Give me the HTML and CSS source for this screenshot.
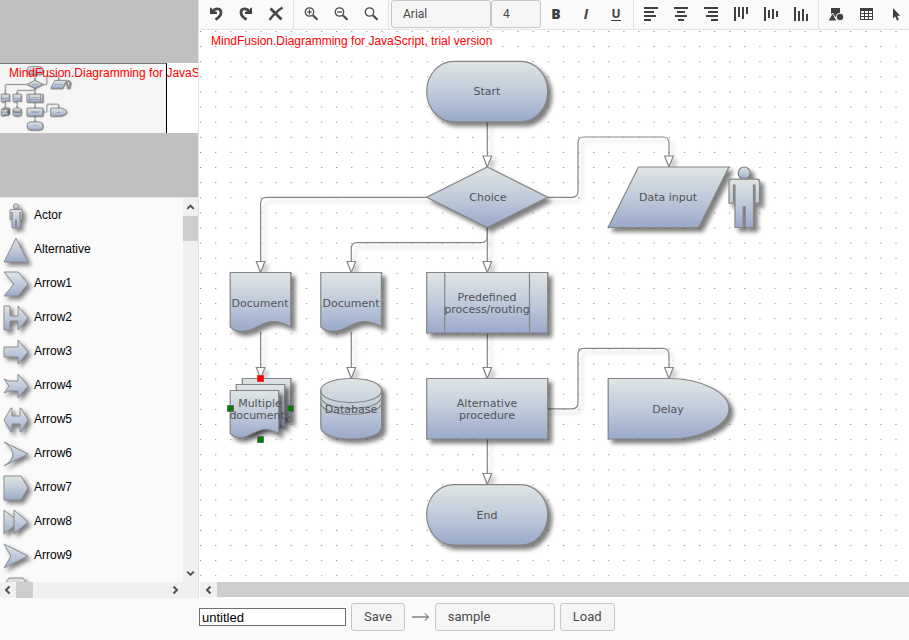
FILE: index.html
```html
<!DOCTYPE html>
<html lang="en">
<head>
<meta charset="utf-8">
<title>Diagram editor</title>
<link rel="stylesheet" href="styles.css">
</head>
<body>
<div class="app">
  <aside class="side">
    <div class="overview">
      <div class="overview-page">
        <div class="overview-view"></div>
        <svg class="mini" aria-hidden="true">
          <g transform="translate(-28.900 -4.500) scale(.131)">
            <use href="#links"/><use href="#nodes"/><use href="#labels"/>
          </g>
        </svg>
        <p class="trial">MindFusion.Diagramming for JavaScript, trial version</p>
      </div>
    </div>
    <div class="palette">
      <ul class="shapes">
        <li><svg><g><circle cx="16" cy="8.500" r="2.700"/><path d="M11 11.500h10q1 0 1 1v9h-2v-7.500v16h-3.500v-8h-1v8H12v-16v7.500h-2v-9q0-1 1-1z"/></g></svg>Actor</li>
        <li><svg><path d="M16 6l12 24H4z"/></svg>Alternative</li>
        <li><svg><path d="M4 6h14l10 12-10 12H4l10-12z"/></svg>Arrow1</li>
        <li><svg><path d="M4 6h6v10h8V6l10 12-10 12v-9h-8v9H4z"/></svg>Arrow2</li>
        <li><svg><path d="M4 13h14V6l10 12-10 12v-7H4z"/></svg>Arrow3</li>
        <li><svg><path d="M4 11l5 2h9V6l10 12-10 12v-7H9l-5 2 5-7z"/></svg>Arrow4</li>
        <li><svg><path d="M4 18l7-12h1v8h8V6h1l7 12-7 12h-1v-8h-8v8h-1z"/></svg>Arrow5</li>
        <li><svg><path d="M4 6l24 12L4 30q18-12 0-24z"/></svg>Arrow6</li>
        <li><svg><path d="M4 6h17l7 12-7 12H4z"/></svg>Arrow7</li>
        <li><svg><path d="M4 6l15 12L4 30z"/><path d="M14 6l14 12-14 12z"/></svg>Arrow8</li>
        <li><svg><path d="M4 6l24 12L4 30l7-12z"/></svg>Arrow9</li>
        <li aria-hidden="true"><svg><path d="M4 13l5-7h14l5 7v10l-5 7H9l-5-7z"/></svg></li>
      </ul>
      <div class="vbar">
        <button class="arrow" aria-label="Scroll up"><svg viewBox="0 0 16 16"><path d="M4.500 10L8 6.500l3.500 3.500"/></svg></button>
        <div class="vthumb"></div>
        <button class="arrow end" aria-label="Scroll down"><svg viewBox="0 0 16 16"><path d="M4.500 6.500L8 10l3.500-3.500"/></svg></button>
      </div>
      <div class="hbar">
        <button class="arrow" aria-label="Scroll left"><svg viewBox="0 0 16 16"><path d="M9.500 4.500L6 8l3.500 3.500"/></svg></button>
        <div class="hthumb"></div>
        <button class="arrow end" aria-label="Scroll right"><svg viewBox="0 0 16 16"><path d="M6.500 4.500L10 8l-3.500 3.500"/></svg></button>
      </div>
      <div class="corner"></div>
    </div>
  </aside>

  <main class="editor">
    <div class="toolbar">
      <div class="group">
        <button aria-label="Undo"><svg viewBox="0 0 18 18"><path class="ink" d="M3 2.500l1.500.5 1 2.500 4.500 1.500V9H3z"/><path class="line" stroke-width="2.800" d="M5.500 6.500C8 3 14 2.500 14 7.500c0 3-2 5-5.500 7"/></svg></button>
        <button aria-label="Redo"><svg viewBox="0 0 18 18"><path class="ink" d="M15 2.500l-1.500.5-1 2.500L8 7v2h7z"/><path class="line" stroke-width="2.800" d="M12.500 6.500C10 3 4 2.500 4 7.500c0 3 2 5 5.500 7"/></svg></button>
        <button aria-label="Delete"><svg viewBox="0 0 18 18"><path class="line" stroke-width="2.900" d="M3.500 3.500l11 11"/><path class="line" stroke-width="2.200" d="M15.500 2.500C10 6 6 10 2.500 15"/></svg></button>
      </div>
      <div class="group">
        <button aria-label="Zoom in"><svg viewBox="0 0 18 18"><circle class="line" cx="7.500" cy="7" r="4.200" stroke-width="1.300"/><path class="line" stroke-width="1.200" d="M5 7h5M7.500 4.500v5"/><path class="line" stroke-width="2.200" d="M10.800 10.300l4.700 4.400"/></svg></button>
        <button aria-label="Zoom out"><svg viewBox="0 0 18 18"><circle class="line" cx="7.500" cy="7" r="4.200" stroke-width="1.300"/><path class="line" stroke-width="1.200" d="M5 7h5"/><path class="line" stroke-width="2.200" d="M10.800 10.300l4.700 4.400"/></svg></button>
        <button aria-label="Reset zoom"><svg viewBox="0 0 18 18"><circle class="line" cx="7.500" cy="7" r="4.200" stroke-width="1.300"/><path class="line" stroke-width="2.200" d="M10.800 10.300l4.700 4.400"/></svg></button>
      </div>
      <div class="group">
        <select class="field font" aria-label="Font"><option>Arial</option></select>
        <select class="field size" aria-label="Font size"><option>4</option></select>
        <button class="letter" aria-label="Bold"><b>B</b></button>
        <button class="letter" aria-label="Italic"><i>I</i></button>
        <button class="letter" aria-label="Underline"><span class="under">U</span></button>
      </div>
      <div class="group">
        <button aria-label="Align left"><svg viewBox="0 0 18 18"><path class="ink" d="M2 2h14v2H2zM2 6h10v2H2zM2 10h12v2H2zM2 14h7v2H2z"/></svg></button>
        <button aria-label="Align center"><svg viewBox="0 0 18 18"><path class="ink" d="M2 2h14v2H2zM5 6h8v2H5zM3 10h12v2H3zM6 14h6v2H6z"/></svg></button>
        <button aria-label="Align right"><svg viewBox="0 0 18 18"><path class="ink" d="M2 2h14v2H2zM6 6h10v2H6zM4 10h12v2H4zM9 14h7v2H9z"/></svg></button>
        <button aria-label="Align top"><svg viewBox="0 0 18 18"><path class="ink" d="M2 2h2v14H2zM6 2h2v10H6zM10 2h2v12h-2zM14 2h2v7h-2z"/></svg></button>
        <button aria-label="Align middle"><svg viewBox="0 0 18 18"><path class="ink" d="M2 2h2v14H2zM6 5h2v8H6zM10 4h2v10h-2zM14 6h2v6h-2z"/></svg></button>
        <button aria-label="Align bottom"><svg viewBox="0 0 18 18"><path class="ink" d="M2 2h2v14H2zM6 6h2v10H6zM10 4h2v12h-2zM14 9h2v7h-2z"/></svg></button>
      </div>
      <div class="group last">
        <button aria-label="Shapes"><svg viewBox="0 0 18 18"><path class="ink" d="M4 3h9v9H4z"/><path class="ink halo" d="M5.500 8L10 16H1z"/><circle class="ink halo" cx="13" cy="12" r="3.800"/></svg></button>
        <button aria-label="Table"><svg viewBox="0 0 18 18"><path class="ink" fill-rule="evenodd" d="M3 3h13v12H3zM4 6h3v2H4zM8 6h3v2H8zM12 6h3v2h-3zM4 9h3v2H4zM8 9h3v2H8zM12 9h3v2h-3zM4 12h3v2H4zM8 12h3v2H8zM12 12h3v2h-3z"/></svg></button>
        <button aria-label="Select"><svg viewBox="0 0 18 18"><path class="ink" d="M6 3v10.500l2.300-2 1.600 4 2-.8-1.700-3.900h3z"/></svg></button>
      </div>
    </div>

    <svg class="canvas" role="img" aria-label="Flowchart">
      <defs>
        <linearGradient id="steel" x1="0" y1="0" x2="0" y2="1">
          <stop offset="0" stop-color="#e0e5e5"/><stop offset=".5" stop-color="#c0cbda"/><stop offset="1" stop-color="#9aa9cb"/>
        </linearGradient>
        <pattern id="dots" x="0" y="1" width="15.118" height="15.118" patternUnits="userSpaceOnUse">
          <path d="M0 0h1.200v1H0z" fill="#8c8c8c"/>
        </pattern>
        <path id="tip" d="M-4.300-11h8.600L0 0z" fill="#fff"/>
      </defs>
      <rect width="100%" height="100%" fill="url(#dots)"/>
      <g class="flow" transform="translate(-200 -30)">
        <g id="links" class="links" fill="none">
          <path d="M487.300 121.500V156M487.300 227v34M487.300 333v35M487.300 439v35M260.600 332v36M351.300 332v36"/>
          <path d="M548 197.300h24q6 0 6-6V143q0-6 6-6h79q6 0 6 6v14"/>
          <path d="M427 197.300H266.600q-6 0-6 6V262"/>
          <path d="M487.300 227v9.600q0 6-6 6H357.300q-6 0-6 6V262"/>
          <path d="M548 408.800h24q6 0 6-6v-48.500q0-6 6-6h79q6 0 6 6V368"/>
          <use href="#tip" x="487.300" y="167"/><use href="#tip" x="487.300" y="272.500"/><use href="#tip" x="487.300" y="378.500"/><use href="#tip" x="487.300" y="484.500"/>
          <use href="#tip" x="260.600" y="272.500"/><use href="#tip" x="260.600" y="378.500"/><use href="#tip" x="351.300" y="272.500"/><use href="#tip" x="351.300" y="378.500"/>
          <use href="#tip" x="669" y="167"/><use href="#tip" x="669" y="378.500"/>
        </g>
        <g id="nodes" class="nodes" fill="url(#steel)">
          <rect x="426.700" y="61.300" width="121" height="60.500" rx="27" ry="30"/>
          <rect x="426.700" y="484.600" width="121" height="60.500" rx="27" ry="30"/>
          <path d="M487.300 167l60.400 30.300-60.400 30.200-60.600-30.200z"/>
          <path d="M638.500 167H729l-30.300 60.500h-90.600z"/>
          <circle cx="744.200" cy="173" r="6"/>
          <path d="M732 179.200h25q2.500 0 2.500 2.500v21.500H755v-18h-1.500v42.300h-8.300v-21h-2v21H735v-42.300h-1.500v18H729v-21.500q0-2.500 3-2.500z"/>
          <path d="M230.200 272.500h60.600V327C270 315 262 326 250 330q-12 4-19.800-3z"/>
          <path d="M320.800 272.500h60.600V327C360.600 315 352.600 326 340.600 330q-12 4-19.800-3z"/>
          <path d="M426.700 272.500h121V333h-121zM444.700 272.500V333M529.500 272.500V333"/>
          <path d="M426.700 378.500h121V439h-121z"/>
          <path d="M608.200 378.500H669c32 0 60 14 60 30.200S701 439 669 439h-60.800z"/>
          <path d="M242.300 378.500h48.500v43.500C275 412 268 421 258 424.500q-9 3.500-15.700-3z"/>
          <path d="M236.200 384.500h48.500V428C269 418 262 427 252 430.500q-9 3.500-15.800-3z"/>
          <path d="M230.200 390.500h48.500V434C263 424 256 433 246 436.500q-9 3.500-15.800-3z"/>
          <path d="M320.800 390.500c0-16 60.800-16 60.800 0V427c0 16-60.800 16-60.800 0z"/>
          <path fill="none" d="M320.800 390.500c0 16 60.800 16 60.800 0M320.800 396.500c0 16 60.800 16 60.800 0M320.800 402.500c0 16 60.800 16 60.800 0"/>
        </g>
        <g id="labels" class="labels">
          <text x="487" y="95">Start</text>
          <text x="488" y="201">Choice</text>
          <text x="668" y="201">Data input</text>
          <text x="260" y="307">Document</text>
          <text x="351" y="307">Document</text>
          <text x="487" y="301">Predefined</text>
          <text x="487" y="313">process/routing</text>
          <text x="260" y="407">Multiple</text>
          <text x="260" y="419">documents</text>
          <text x="351" y="413">Database</text>
          <text x="487" y="407">Alternative</text>
          <text x="487" y="419">procedure</text>
          <text x="668" y="413">Delay</text>
          <text x="487" y="519">End</text>
        </g>
        <g class="handles">
          <path class="hot" d="M257.500 375.500h6v6h-6z"/>
          <path d="M227.500 405.500h6v6h-6zM287.500 405.500h6v6h-6zM257.500 436.500h6v6h-6z"/>
        </g>
      </g>
      <text class="trial" x="11" y="15">MindFusion.Diagramming for JavaScript, trial version</text>
    </svg>

    <div class="hbar wide">
      <button class="arrow" aria-label="Scroll left"><svg viewBox="0 0 16 16"><path d="M9.500 4.500L6 8l3.500 3.500"/></svg></button>
      <div class="hthumb"></div>
    </div>
  </main>

  <footer class="files">
    <input class="name" type="text" value="untitled" aria-label="File name">
    <button class="field">Save</button>
    <svg class="to" viewBox="0 0 20 10" aria-hidden="true"><path d="M2 5h16M15 1.500L18.500 5 15 8.500"/></svg>
    <select class="field open" aria-label="Saved diagram"><option>sample</option></select>
    <button class="field">Load</button>
  </footer>
</div>
</body>
</html>
```

FILE: styles.css
```css
* { box-sizing: border-box; }

body {
  margin: 0;
  font: 12px/16px "Liberation Sans", Arial, sans-serif;
  color: #000;
  background: #fafafa;
}

button, select, input { font: inherit; margin: 0; }

.app {
  display: grid;
  grid-template: minmax(0, 1fr) 42px / 199px minmax(0, 1fr);
  height: 100vh;
}

/* Left column */
.side {
  display: flex;
  flex-direction: column;
  min-height: 0;
  border-right: 1px solid #e0e2e4;
}

.overview {
  flex: none;
  height: 198px;
  padding: 63px 0 64px;
  background: #c0c0c0;
  border-bottom: 1px solid #e6e6e6;
}

.overview-page {
  display: grid;
  height: 70px;
  background: #fff;
  overflow: hidden;
}

.overview-page > * { grid-area: 1 / 1; }

.overview-view {
  width: 167px;
  background: #f5f5f5;
  border: solid #000;
  border-width: 1px 1px 0 0;
  border-top-color: #777;
}

.mini {
  width: 100%;
  height: 70px;
  stroke: #8c8c8c;
  stroke-width: 7;
}

.trial {
  margin: 0;
  color: #f00;
  fill: #f00;
  white-space: nowrap;
}

p.trial { padding: 2px 0 0 9px; }

.palette {
  flex: 1;
  min-height: 0;
  display: grid;
  grid-template: minmax(0, 1fr) 16px / minmax(0, 1fr) 15px;
}

.shapes {
  margin: 0;
  padding: 0;
  list-style: none;
  overflow: hidden;
}

.shapes li {
  display: flex;
  align-items: center;
  height: 34px;
}

.shapes svg {
  width: 34px;
  height: 34px;
  fill: url(#steel);
  stroke: #8c8c8c;
  filter: drop-shadow(3px 3px 2px rgba(0, 0, 0, .5));
}

.vbar, .hbar { display: flex; background: #f0f0f0; }
.vbar { flex-direction: column; }
.corner { background: #f0f0f0; }
.vthumb { height: 25px; background: #cdcdcd; }
.hthumb { width: 17px; background: #cdcdcd; }

.arrow {
  flex: none;
  display: flex;
  align-items: center;
  justify-content: center;
  width: 16px;
  height: 16px;
  padding: 0;
  border: 0;
  background: none;
}

.vbar .arrow { width: 15px; height: 18px; }
.arrow.end { margin: auto 0 0; }
.hbar .arrow.end { margin: 0 0 0 auto; }

.arrow svg {
  width: 16px;
  height: 16px;
  fill: none;
  stroke: #505050;
  stroke-width: 2;
}

.wide { flex: none; height: 16px; margin-left: 1px; border-bottom: 1px solid #fafafa; }
.wide .arrow { width: 17px; }
.wide .hthumb { flex: 1; }

/* Editor */
.editor {
  display: flex;
  flex-direction: column;
  min-width: 0;
  min-height: 0;
  background: #fff;
}

.toolbar {
  flex: none;
  display: flex;
  height: 30px;
  overflow: hidden;
  background: #fafafa;
  border-bottom: 1px solid #e2e2e2;
}

.group {
  flex: none;
  display: flex;
  padding: 0 2px;
  border-right: 1px solid #e2e2e2;
}

.group.last { border: 0; }

.group button {
  display: flex;
  align-items: center;
  justify-content: center;
  width: 30px;
  height: 28px;
  padding: 0;
  border: 0;
  background: none;
  color: #404040;
}

.group svg { width: 18px; height: 18px; }
.ink { fill: #404040; }
.line { fill: none; stroke: #484848; }
.halo { stroke: #fafafa; stroke-width: 1; }

.group .letter { font: bold 14px/18px "Open Sans", sans-serif; }

.under {
  font-size: 12px;
  line-height: 12px;
  border-bottom: 1px solid #404040;
}

.field {
  height: 28px;
  padding: 0 12px;
  color: #484848;
  font: 13px/16px Roboto, "Liberation Sans", sans-serif;
  background: #f5f5f5;
  border: 1px solid #c6c6c6;
  border-radius: 3px;
  appearance: none;
}

.font, .size { padding: 0 11px; font-size: 12px; }
.font { width: 100px; }
.size { width: 50px; }

.canvas {
  flex: 1;
  width: calc(100% - 1px);
  min-height: 0;
  margin-left: 1px;
}

.flow { stroke: #858585; stroke-width: 1.2; }
.canvas .links { filter: drop-shadow(4px 4px 2px rgba(0, 0, 0, .2)); }
.canvas .nodes > * { filter: drop-shadow(4px 4px 2px rgba(0, 0, 0, .5)); }
.canvas .nodes > [fill="none"] { filter: none; }

.labels {
  font: 11px "DejaVu Sans", Verdana, sans-serif;
  fill: #505458;
  stroke: none;
  text-anchor: middle;
}

.handles { fill: #008000; stroke: #666; stroke-width: 1; }
.handles .hot { fill: #f00; stroke: #d33; }

/* Bottom bar */
.files {
  grid-column: 1 / -1;
  display: flex;
  align-items: center;
  gap: 5px;
  padding: 0 0 4px 199px;
  background: #fafafa;
}

.name {
  width: 147px;
  height: 18px;
  padding: 0 2px;
  font-size: 13px;
  color: #000;
  background: #fff;
  border: 1px solid #707070;
}

.to {
  width: 20px;
  height: 10px;
  fill: none;
  stroke: #484848;
}

.open { width: 120px; }
```
